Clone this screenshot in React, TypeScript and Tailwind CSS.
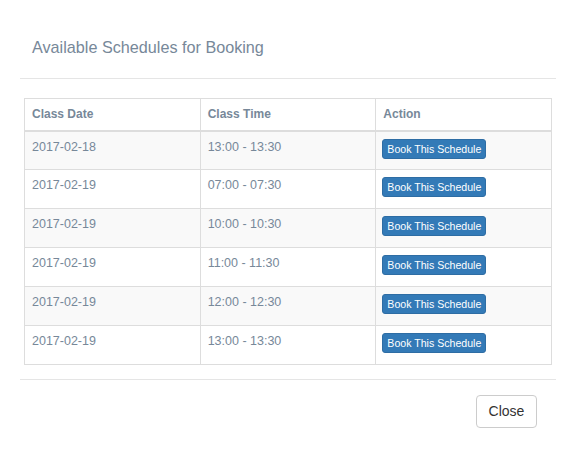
const rows = [
  { date: "2017-02-18", time: "13:00 - 13:30" },
  { date: "2017-02-19", time: "07:00 - 07:30" },
  { date: "2017-02-19", time: "10:00 - 10:30" },
  { date: "2017-02-19", time: "11:00 - 11:30" },
  { date: "2017-02-19", time: "12:00 - 12:30" },
  { date: "2017-02-19", time: "13:00 - 13:30" },
];

export default function App() {
  return (
    <div className="h-[461px] w-[582px] bg-white font-['Liberation_Sans',Arial,sans-serif] text-[#778899]">
      <div className="ml-[20px] w-[536px]">
        {/* header */}
        <div className="border-b border-[#e5e5e5] pl-[12px] pt-[36px] pb-[20px]">
          <h4 className="text-[16.2px] leading-[22px] text-[#778899]">Available Schedules for Booking</h4>
        </div>

        {/* body */}
        <div className="px-[4px] pt-[19px] pb-[14px]">
          <table className="w-[528px] table-fixed border-collapse border border-[#dddddd] text-[12.5px]">
            <thead>
              <tr className="h-[32px] border-b-2 border-[#dddddd] text-left">
                <th className="border-r border-[#dddddd] pl-[7px] pr-[8px] font-bold text-[12px]">Class Date</th>
                <th className="border-r border-[#dddddd] pl-[7px] pr-[8px] font-bold text-[12px]">Class Time</th>
                <th className="pl-[7px] pr-[8px] font-bold text-[12px]">Action</th>
              </tr>
            </thead>
            <tbody>
              {rows.map((r, i) => (
                <tr key={i} className={`h-[39px] border-t border-[#dddddd] ${i % 2 === 0 ? "bg-[#f9f9f9]" : "bg-white"}`}>
                  <td className="border-r border-[#dddddd] pl-[7px] pr-[8px] pt-[8px] align-top leading-[15px]">{r.date}</td>
                  <td className="border-r border-[#dddddd] pl-[7px] pr-[8px] pt-[8px] align-top leading-[15px]">{r.time}</td>
                  <td className="pl-[6px] pr-[8px] pt-[7px] align-top">
                    <button className="h-[20px] rounded-[3px] border border-[#2e6da4] bg-[#337ab7] px-[4px] text-[10.6px] leading-[18px] text-white">
                      Book This Schedule
                    </button>
                  </td>
                </tr>
              ))}
            </tbody>
          </table>
        </div>

        {/* footer */}
        <div className="flex justify-end border-t border-[#e5e5e5] pr-[19px] pt-[15px]">
          <button className="h-[33px] w-[61px] rounded-[4px] border border-[#cccccc] bg-white text-[14px] text-[#333333]">
            Close
          </button>
        </div>
      </div>
    </div>
  );
}
